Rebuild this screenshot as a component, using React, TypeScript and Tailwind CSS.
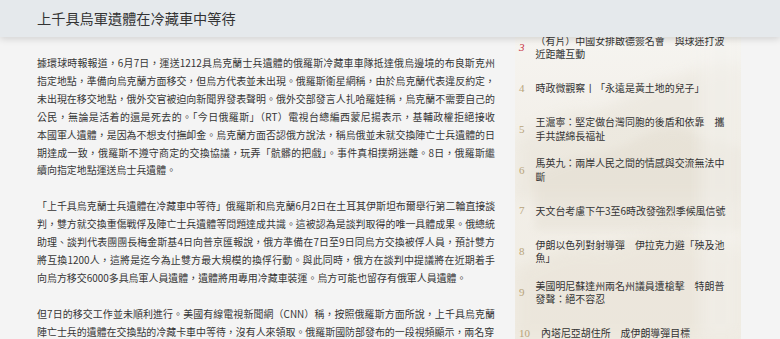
import React from "react";

const p1 = [
  "據環球時報報道，6月7日，運送1212具烏克蘭士兵遺體的俄羅斯冷藏車車隊抵達俄烏邊境的布良斯克州",
  "指定地點，準備向烏克蘭方面移交，但烏方代表並未出現。俄羅斯衛星網稱，由於烏克蘭代表違反約定，",
  "未出現在移交地點，俄外交官被迫向新聞界發表聲明。俄外交部發言人扎哈羅娃稱，烏克蘭不需要自己的",
  "公民，無論是活着的還是死去的。「今日俄羅斯」（RT）電視台總編西蒙尼揚表示，基輔政權拒絕接收",
  "本國軍人遺體，是因為不想支付撫卹金。烏克蘭方面否認俄方說法，稱烏俄並未就交換陣亡士兵遺體的日",
  "期達成一致，俄羅斯不遵守商定的交換協議，玩弄「骯髒的把戲」。事件真相撲朔迷離。8日，俄羅斯繼",
  "續向指定地點運送烏士兵遺體。",
];
const p2 = [
  "「上千具烏克蘭士兵遺體在冷藏車中等待」俄羅斯和烏克蘭6月2日在土耳其伊斯坦布爾舉行第二輪直接談",
  "判，雙方就交換重傷戰俘及陣亡士兵遺體等問題達成共識。這被認為是談判取得的唯一具體成果。俄總統",
  "助理、談判代表團團長梅金斯基4日向普京匯報說，俄方準備在7日至9日同烏方交換被俘人員，預計雙方",
  "將互換1200人，這將是迄今為止雙方最大規模的換俘行動。與此同時，俄方在談判中提議將在近期着手",
  "向烏方移交6000多具烏軍人員遺體，遺體將用專用冷藏車裝運。烏方可能也留存有俄軍人員遺體。",
];
const p3 = [
  "但7日的移交工作並未順利進行。美國有線電視新聞網（CNN）稱，按照俄羅斯方面所說，上千具烏克蘭",
  "陣亡士兵的遺體在交換點的冷藏卡車中等待，沒有人來領取。俄羅斯國防部發布的一段視頻顯示，兩名穿",
];

const items: { n: number; lines: string[] }[] = [
  { n: 3, lines: ["（有片）中國女排啟德簽名會　與球迷打波", "近距離互動"] },
  { n: 4, lines: ["時政微觀察丨「永遠是黃土地的兒子」"] },
  { n: 5, lines: ["王滬寧：堅定做台灣同胞的後盾和依靠　攜", "手共謀綿長福祉"] },
  { n: 6, lines: ["馬英九：兩岸人民之間的情感與交流無法中", "斷"] },
  { n: 7, lines: ["天文台考慮下午3至6時改發強烈季候風信號"] },
  { n: 8, lines: ["伊朗以色列對射導彈　伊拉克力避「殃及池", "魚」"] },
  { n: 9, lines: ["美國明尼蘇達州兩名州議員遭槍擊　特朗普", "發聲：絕不容忍"] },
  { n: 10, lines: ["內塔尼亞胡住所　成伊朗導彈目標"] },
];

function Para({ lines }: { lines: string[] }) {
  return (
    <div className="mb-[18px]">
      {lines.map((l, i) => (
        <div
          key={i}
          className={
            i < lines.length - 1
              ? "whitespace-nowrap text-justify [text-align-last:justify]"
              : "whitespace-nowrap"
          }
        >
          {l}
        </div>
      ))}
    </div>
  );
}

export default function App() {
  return (
    <div
      className="relative w-[780px] h-[339px] overflow-hidden bg-[#f4f4f4] text-[#333]"
      style={{ fontFamily: '"Noto Sans CJK TC", "Noto Sans CJK SC", sans-serif' }}
    >
      <header className="absolute top-0 left-0 right-0 z-10 h-[37px] bg-[#e5e9ec] shadow-[0_2px_7px_rgba(0,0,0,0.14)] flex items-center pl-[37px]">
        <h1 className="text-[14.2px] leading-none text-[#333] font-normal">上千具烏軍遺體在冷藏車中等待</h1>
      </header>

      <div className="flex pl-[37px] gap-[20px]">
        <article className="w-[458px] pt-[54px] text-[9.95px] leading-[17.9px] text-[#363636]">
          <Para lines={p1} />
          <Para lines={p2} />
          <Para lines={p3} />
        </article>

        <aside className="relative w-[226px] h-[339px] pt-[27px] bg-[#f6f5f2] overflow-hidden">
          <svg
            className="absolute inset-0"
            width="226"
            height="339"
            viewBox="0 0 226 339"
            aria-hidden="true"
          >
            <defs>
              <linearGradient id="bgG" x1="0" y1="0" x2="0" y2="1">
                <stop offset="0" stopColor="#f7f6f3" />
                <stop offset="0.35" stopColor="#f3f0ea" />
                <stop offset="1" stopColor="#f0ece3" />
              </linearGradient>
              <filter id="blur" x="-20%" y="-20%" width="140%" height="140%">
                <feGaussianBlur stdDeviation="7" />
              </filter>
              <filter id="blur2" x="-20%" y="-20%" width="140%" height="140%">
                <feGaussianBlur stdDeviation="4" />
              </filter>
            </defs>
            <rect width="226" height="339" fill="url(#bgG)" />
            <path
              d="M0 140 C30 120 50 110 80 112 C110 100 130 80 160 78 C180 70 200 60 226 65 L226 200 L0 200 Z"
              fill="#e6e1d5"
              opacity="0.45"
              filter="url(#blur)"
            />
            <path
              d="M20 175 C60 150 90 160 120 140 C140 130 160 120 180 135 C200 145 215 140 226 150 L226 230 L20 230 Z"
              fill="#ddd6c7"
              opacity="0.3"
              filter="url(#blur2)"
            />
            <path
              d="M0 270 C30 255 60 240 90 250 C120 238 150 225 180 240 C200 248 215 245 226 250 L226 339 L0 339 Z"
              fill="#e8e2d6"
              opacity="0.55"
              filter="url(#blur)"
            />
            <rect x="185" y="0" width="41" height="339" fill="#f4f3ef" opacity="0.5" filter="url(#blur)" />
          </svg>

          <ul className="relative">
            {items.map((it) => (
              <li key={it.n} className="flex items-center h-[40.8px] pl-[4px] gap-[11px]">
                <span
                  className={
                    it.n === 3
                      ? "text-[11px] italic text-[#c8323e]"
                      : "text-[11px] text-[#b8a47a]"
                  }
                  style={{ fontFamily: '"Liberation Serif", serif' }}
                >
                  {it.n}
                </span>
                <div className="text-[9.95px] leading-[13.5px] text-[#333]">
                  {it.lines.map((l, i) => (
                    <div key={i} className="whitespace-nowrap">
                      {l}
                    </div>
                  ))}
                </div>
              </li>
            ))}
          </ul>
        </aside>
      </div>
    </div>
  );
}
